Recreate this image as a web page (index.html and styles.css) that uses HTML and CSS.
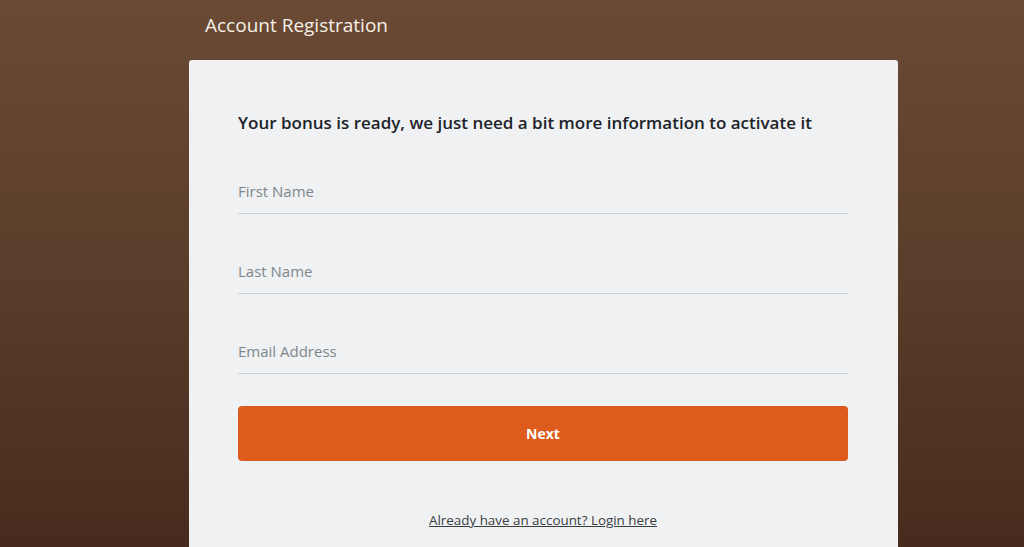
FILE: index.html
```html
<!DOCTYPE html>
<html lang="en">
<head>
<meta charset="utf-8">
<title>Account Registration</title>
<link rel="stylesheet" href="styles.css">
</head>
<body>
<div class="page">
  <div class="wrap">
    <h1 class="title">Account Registration</h1>
    <div class="card">
      <h2 class="lead">Your bonus is ready, we just need a bit more information to activate it</h2>
      <form class="form">
        <input class="field" type="text" placeholder="First Name">
        <input class="field" type="text" placeholder="Last Name">
        <input class="field" type="email" placeholder="Email Address">
        <button class="next" type="button">Next</button>
      </form>
      <p class="login"><a href="#">Already have an account? Login here</a></p>
    </div>
  </div>
</div>
</body>
</html>
```
FILE: styles.css
```css
html, body {
  margin: 0;
  height: 100%;
}
body {
  background: linear-gradient(180deg, #6a4a34 0%, #5a3d2a 50%, #472c1d 100%);
  font-family: "Open Sans", "Noto Sans", sans-serif;
  overflow: hidden;
}
.page {
  padding-left: 189px;
}
.wrap {
  width: 709px;
}
.title {
  margin: 0;
  height: 60px;
  box-sizing: border-box;
  padding: 11px 0 0 16px;
  font-size: 19px;
  font-weight: 400;
  color: #f6f0e8;
  line-height: 28px;
}
.card {
  background: #eff1f3;
  border-radius: 3px 3px 0 0;
  padding: 50px 50px 40px 49px;
  min-height: 500px;
}
.lead {
  margin: 0 0 32px;
  font-size: 17px;
  font-weight: 600;
  color: #1d2328;
  line-height: 26px;
}
.form {
  display: flex;
  flex-direction: column;
}
.field {
  border: 0;
  border-bottom: 1px solid #cdd1d5;
  background: transparent;
  height: 45px;
  margin-bottom: 34px;
  padding: 0;
  font-family: inherit;
  font-size: 15px;
  color: #333;
  outline: none;
}
.field::placeholder {
  color: #7d878c;
}
.next {
  margin-top: -2px;
  height: 55px;
  border: 0;
  border-radius: 4px;
  background: #de5b1e;
  color: #fff;
  font-family: inherit;
  font-weight: 700;
  font-size: 14px;
}
.login {
  margin: 50px 0 0;
  text-align: center;
  font-size: 13.4px;
}
.login a {
  color: #3a3d40;
}
```
